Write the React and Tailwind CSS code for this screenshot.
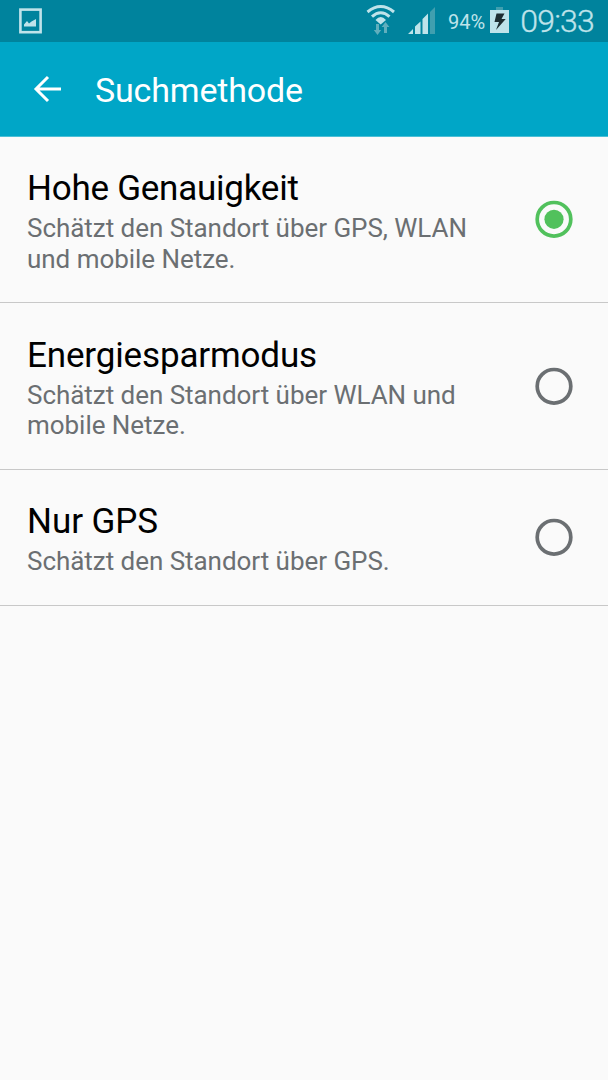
import React from 'react';

const options = [
  { title: 'Hohe Genauigkeit', spacing: 'tracking-[-0.250px]', lines: ['Schätzt den Standort über GPS, WLAN', 'und mobile Netze.'], selected: true, height: 'h-[166px]' },
  { title: 'Energiesparmodus', spacing: 'tracking-[-0.150px]', lines: ['Schätzt den Standort über WLAN und', 'mobile Netze.'], selected: false, height: 'h-[167px]' },
  { title: 'Nur GPS', spacing: 'tracking-[-0.060px]', lines: ['Schätzt den Standort über GPS.'], selected: false, height: 'h-[136px]' },
];

function Radio({ selected }) {
  const color = selected ? '#51c15c' : '#6b6f72';
  return (
    <svg width="38" height="38" viewBox="0 0 38 38" className="-mt-px shrink-0">
      <circle cx="19" cy="19.300" r="16.8" fill="none" stroke={color} strokeWidth="3.7" />
      {selected && <circle cx="19" cy="19.300" r="9.6" fill={color} />}
    </svg>
  );
}

function StatusBar() {
  return (
    <div className="flex h-[42px] shrink-0 items-center bg-[#00839d] pl-[19px] pr-[14px] text-[#bfe3ea]">
      <svg width="23" height="26" viewBox="0 0 23 26">
        <rect x="1.4" y="1.6" width="20.2" height="22.6" fill="none" stroke="currentColor" strokeWidth="2.6" />
        <path d="M5 18.500V16.500l3-3.500 2 2.500 2.500-2L17 11v7.500z" fill="currentColor" />
      </svg>
      <svg width="30" height="42" viewBox="366 0 30 42" className="ml-[324px]">
        <g fill="none" stroke="currentColor" strokeWidth="3">
          <path d="M367.500 12Q380.700 1 394 12" />
          <path d="M372 16.700Q380.700 8.800 389.500 16.700" />
        </g>
        <path d="M375.500 20Q380.700 14 386 20L380.700 24.500z" fill="currentColor" />
        <path d="M376 24h3v6h2.200l-3.700 5-3.700-5h2.200zM384 33h3v-6h2.400l-3.900-5-3.900 5H384z" fill="#60aebd" />
      </svg>
      <svg width="28" height="42" viewBox="408 0 28 42" className="ml-[12px]">
        <path d="M408 34l5-5v5zM415 34v-7.500l5.500-5V34zM422.500 34V19l5.500-5.500V34z" fill="currentColor" />
        <path d="M430 34V12l5-5v27z" fill="#409faf" />
      </svg>
      <span className="ml-[12px] w-[38px] pt-px text-[20px]">94%</span>
      <svg width="20" height="42" viewBox="490 0 20 42" className="ml-[4px]">
        <path d="M496 7h7v3h-7z" fill="#409faf" />
        <path d="M490 10h19v23h-19z" fill="currentColor" />
        <path d="M496.500 13.500h8l-3 5.500h4.200l-9.700 11 3-8h-4.500z" fill="#1e2d31" />
      </svg>
      <span className="ml-auto text-[32px] font-light tracking-[-0.800px] [-webkit-text-stroke:0.35px_#bfe3ea]">09:33</span>
    </div>
  );
}

export default function App() {
  return (
    <div className="flex h-[1080px] w-[608px] flex-col overflow-hidden bg-[#fafafa] font-[Roboto,sans-serif]">
      <StatusBar />
      <header className="flex h-[95px] shrink-0 items-center border-b border-[#4bbfd6] bg-[#00a6c7] pl-[33px] text-white">
        <svg width="29" height="28" viewBox="0 0 29 28" fill="none" stroke="currentColor" strokeWidth="3">
          <path d="M28 14H3M15 2L3 14l12 12" />
        </svg>
        <h1 className="ml-[33px] pt-[3px] text-[34px] tracking-[-0.170px]">Suchmethode</h1>
      </header>
      <main>
        {options.map((o) => (
          <section key={o.title} className={`flex items-center border-b border-[#c8c8c8] pl-[27px] pr-[35px] ${o.height}`}>
            <div className="flex-1 pt-[3px]">
              <h2 className={`mb-[3px] whitespace-nowrap text-[35px] leading-[42px] text-black ${o.spacing}`}>{o.title}</h2>
              {o.lines.map((l) => (
                <p key={l} className="whitespace-nowrap text-[26px] leading-[30.500px] tracking-[-0.040px] text-[#6b6f72]">{l}</p>
              ))}
            </div>
            <Radio selected={o.selected} />
          </section>
        ))}
      </main>
    </div>
  );
}
